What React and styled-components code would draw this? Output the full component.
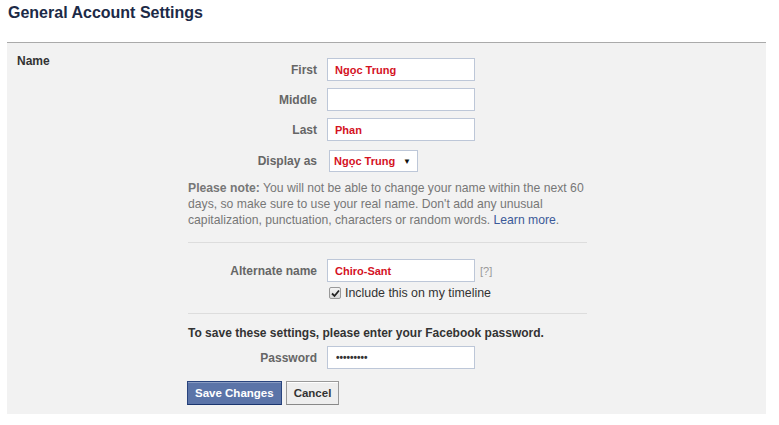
import React from 'react'
import styled, { createGlobalStyle } from 'styled-components'

const GlobalStyle = createGlobalStyle`
  body {
    margin: 0;
    background: #fff;
    font-family: "Liberation Sans", Arial, sans-serif;
    font-size: 12px;
    color: #333;
  }
`

const Page = styled.div`
  width: 779px;
  height: 425px;
  padding: 3px 0 0 0;
  box-sizing: border-box;
`

const Title = styled.h2`
  margin: 0 0 0 8px;
  font-size: 16px;
  line-height: 20px;
  font-weight: bold;
  color: #1c2a47;
`

const Panel = styled.div`
  margin: 19px 0 0 7px;
  width: 759px;
  height: 372px;
  box-sizing: border-box;
  background: #f2f2f2;
  border-top: 1px solid #aaa;
  display: grid;
  grid-template-columns: 181px 400px;
  padding-top: 10px;
`

const SectionLabel = styled.div`
  padding-left: 10px;
  font-weight: bold;
  color: #333;
  line-height: 16px;
`

const Form = styled.div`
  display: flex;
  flex-direction: column;
  padding-top: 5px;
`

const Row = styled.div`
  display: grid;
  grid-template-columns: 129px 148px auto;
  column-gap: 10px;
  align-items: center;
  margin-bottom: ${p => p.$gap ?? 7}px;
`

const Label = styled.label`
  text-align: right;
  font-weight: bold;
  color: #666;
`

const Input = styled.input`
  box-sizing: border-box;
  width: 148px;
  height: 23px;
  border: 1px solid #bdc7d8;
  background: #fff;
  padding: 0 7px;
  margin: 0;
  font-family: "Liberation Sans", Arial, sans-serif;
  font-weight: bold;
  font-size: 11px;
  color: #d4121f;
  outline: none;
  &[type='password'] {
    font-size: 10px;
    color: #333;
    padding-left: 8px;
  }
`

const Select = styled.div`
  box-sizing: border-box;
  margin-left: 2px;
  width: 89px;
  height: 22px;
  border: 1px solid #bdc7d8;
  background: #fff;
  display: flex;
  align-items: center;
  justify-content: space-between;
  padding: 0 6px 0 4px;
  font-weight: bold;
  font-size: 11px;
  color: #d4121f;
  span:last-child {
    color: #111;
    font-size: 8px;
  }
`

const Note = styled.p`
  margin: 8px 0 0 0;
  width: 400px;
  font-size: 12.2px;
  line-height: 16px;
  color: #777;
  b {
    color: #777;
  }
  a {
    color: #3b5998;
    text-decoration: none;
  }
`

const Divider = styled.hr`
  margin: ${p => p.$top}px 0 ${p => p.$bottom}px 0;
  border: 0;
  border-top: 1px solid #ddd;
  width: 399px;
`

const Help = styled.span`
  color: #999;
  font-size: 11px;
  margin-left: -5px;
`

const CheckRow = styled.div`
  display: flex;
  align-items: center;
  margin-left: 140px;
  margin-top: -1px;
  font-size: 12.4px;
  color: #333;
  gap: 4px;
`

const CheckBox = styled.span`
  box-sizing: border-box;
  width: 12px;
  height: 12px;
  border: 1px solid #999;
  border-radius: 2px;
  background: linear-gradient(#f4f4f4, #d8d8d8);
  display: inline-flex;
  align-items: center;
  justify-content: center;
  margin-left: 1px;
`

const Prompt = styled.div`
  font-weight: bold;
  color: #333;
  line-height: 16px;
  margin-bottom: 5px;
`

const Buttons = styled.div`
  display: flex;
  gap: 4px;
  margin-top: 12px;
  margin-left: -1px;
`

const Button = styled.button`
  box-sizing: border-box;
  height: 24px;
  padding: 0 7px;
  font-family: "Liberation Sans", Arial, sans-serif;
  font-weight: bold;
  font-size: 11.5px;
  cursor: pointer;
  border: 1px solid ${p => (p.$primary ? '#29447e' : '#999')};
  border-bottom-color: ${p => (p.$primary ? '#1a356e' : '#888')};
  background: ${p => (p.$primary ? '#5b74a8' : '#eee')};
  color: ${p => (p.$primary ? '#fff' : '#333')};
  box-shadow: inset 0 1px 0 ${p => (p.$primary ? '#8a9cc2' : '#fff')};
`

export default function App() {
  return (
    <Page>
      <GlobalStyle />
      <Title>General Account Settings</Title>
      <Panel>
        <SectionLabel>Name</SectionLabel>
        <Form>
          <Row>
            <Label>First</Label>
            <Input defaultValue="Ngọc Trung" />
          </Row>
          <Row>
            <Label>Middle</Label>
            <Input defaultValue="" />
          </Row>
          <Row $gap={9}>
            <Label>Last</Label>
            <Input defaultValue="Phan" />
          </Row>
          <Row $gap={0}>
            <Label>Display as</Label>
            <Select>
              <span>Ngọc Trung</span>
              <span>▼</span>
            </Select>
          </Row>
          <Note>
            <b>Please note:</b> You will not be able to change your name within the next 60
            days, so make sure to use your real name. Don't add any unusual
            capitalization, punctuation, characters or random words. <a href="#">Learn more</a>.
          </Note>
          <Divider $top={14} $bottom={16} />
          <Row $gap={5}>
            <Label>Alternate name</Label>
            <Input defaultValue="Chiro-Sant" />
            <Help>[?]</Help>
          </Row>
          <CheckRow>
            <CheckBox>
              <svg width="9" height="9" viewBox="0 0 9 9">
                <path d="M1 4.5 L3.5 7 L8 1.5" fill="none" stroke="#222" strokeWidth="1.8" />
              </svg>
            </CheckBox>
            <span>Include this on my timeline</span>
          </CheckRow>
          <Divider $top={13} $bottom={11} />
          <Prompt>To save these settings, please enter your Facebook password.</Prompt>
          <Row $gap={0}>
            <Label>Password</Label>
            <Input type="password" defaultValue="123456789" />
          </Row>
          <Buttons>
            <Button $primary>Save Changes</Button>
            <Button>Cancel</Button>
          </Buttons>
        </Form>
      </Panel>
    </Page>
  )
}
